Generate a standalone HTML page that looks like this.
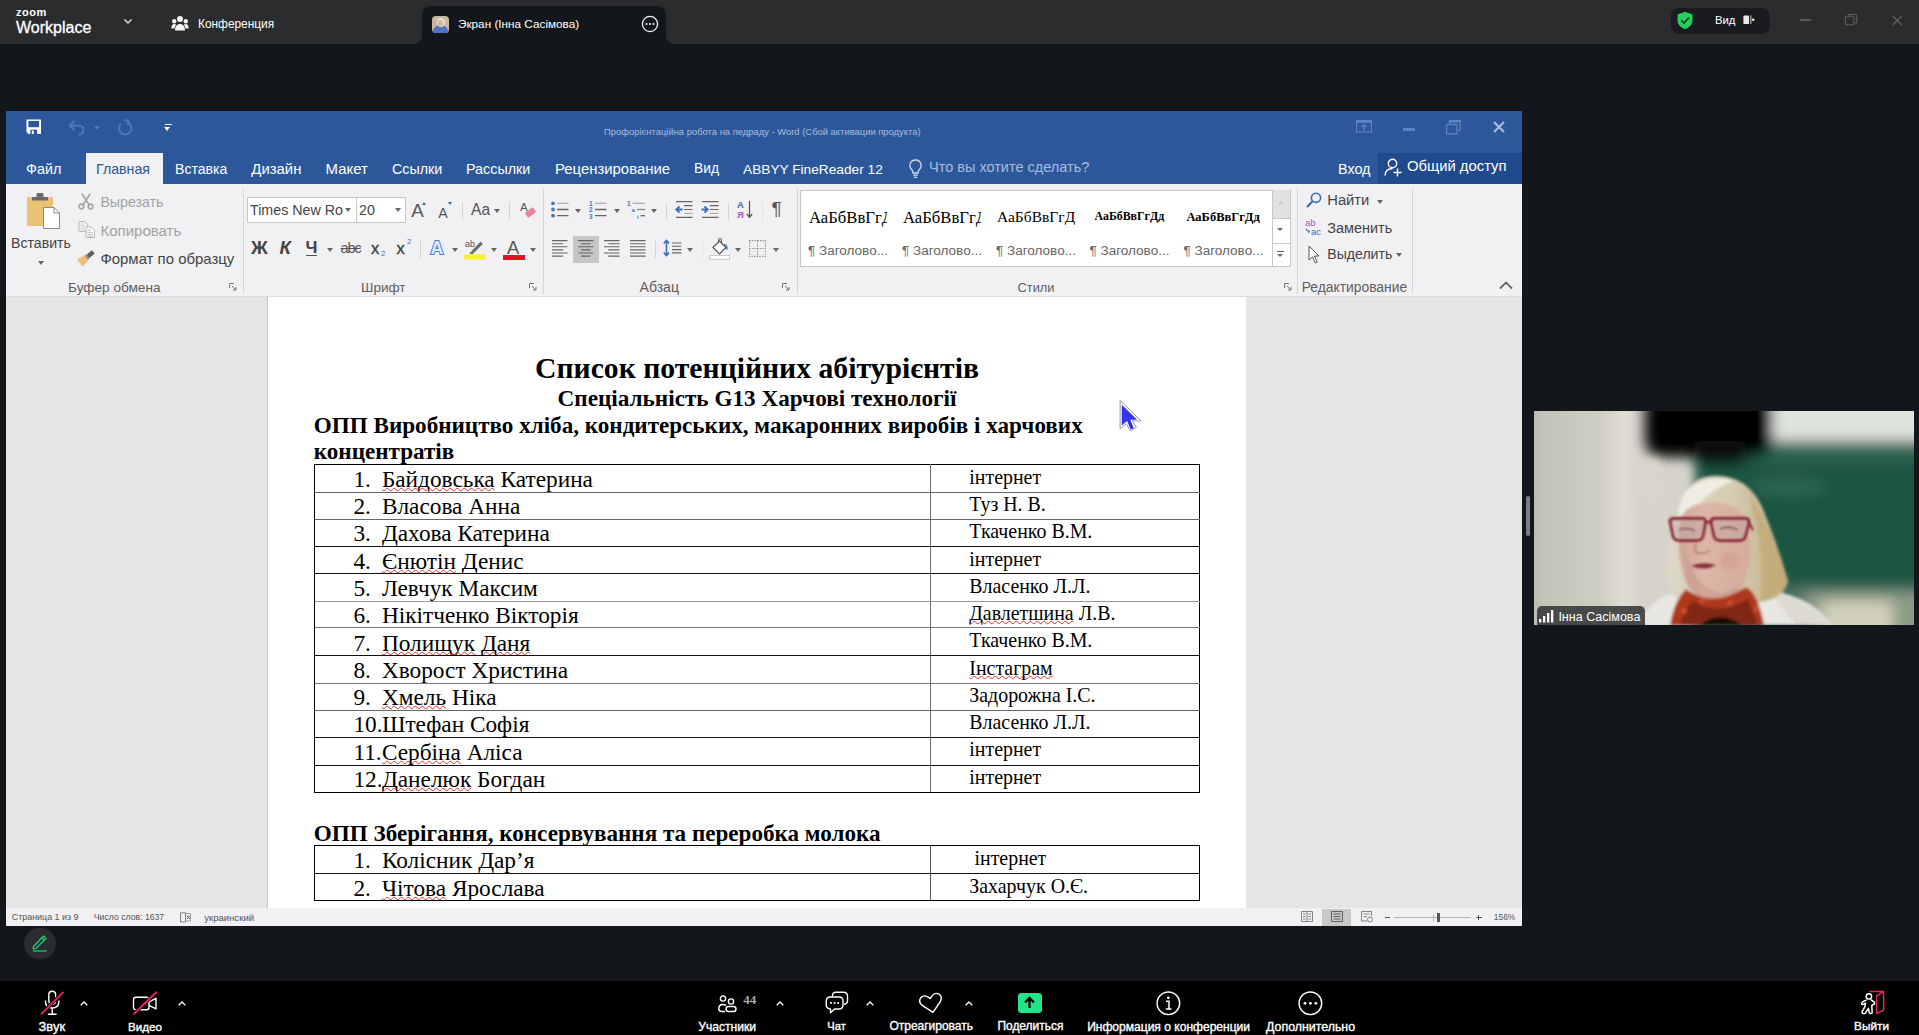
<!DOCTYPE html>
<html lang="ru"><head><meta charset="utf-8"><title>Zoom Workplace</title>
<style>
html,body{margin:0;padding:0}
body{width:1919px;height:1035px;overflow:hidden;background:#13161a;position:relative;font-family:"Liberation Sans",sans-serif;color:#fff}
.a{position:absolute}
.t{position:absolute;white-space:nowrap;line-height:1}
svg{position:absolute;overflow:visible}
/* zoom top bar */
#top{left:0;top:0;width:1919px;height:44px;background:#2b2c2e}
#tabact{left:422px;top:6px;width:244px;height:38px;background:#13161a;border-radius:9px 9px 0 0}
/* word */
#word{left:6px;top:111px;width:1516px;height:815px;background:#e5e5e5;overflow:hidden}
#wtitle{left:0;top:0;width:1516px;height:73px;background:#2c589b}
#ribbon{left:0;top:73px;width:1516px;height:112.500px;background:#f1f0f2;border-bottom:1px solid #dcdcde;box-sizing:border-box}
.tab{position:absolute;top:51px;font-size:14.9px;line-height:1;color:#fff;white-space:nowrap}
.sep{position:absolute;top:3px;width:1px;height:106px;background:#d6d6d8}
.gl{position:absolute;top:169px;font-size:13.6px;line-height:1;color:#5e5e5e;white-space:nowrap}
.rt{position:absolute;font-size:14.9px;line-height:1;color:#444;white-space:nowrap}
.dd{position:absolute;width:0;height:0;border-left:3.8px solid transparent;border-right:3.8px solid transparent;border-top:4.2px solid #666}
.vs{position:absolute;width:1px;height:20px;background:#d4d4d4}
#page{left:261px;top:186px;width:979px;height:612px;background:#fff;border-left:1px solid #c9c9c9;box-sizing:border-box}
#status{left:0;top:797px;width:1516px;height:18px;background:#f1f0f2}
.st{position:absolute;font-size:8.6px;line-height:1;color:#555;white-space:nowrap}
/* doc */
.doc{font-family:"Liberation Serif",serif;color:#000}
.h{position:absolute;white-space:nowrap;line-height:1;font-weight:bold;font-family:"Liberation Serif",serif;color:#000}
table.d{position:absolute;border-collapse:collapse;font-family:"Liberation Serif",serif;color:#000}
.w{text-decoration:underline wavy #e03030;text-decoration-thickness:1px;text-underline-offset:.4px;text-decoration-skip-ink:none}
/* bottom */
#bot{left:0;top:981px;width:1919px;height:54px;background:#000}
.bl{position:absolute;top:1020.700px;font-size:12px;line-height:1;color:#fff;white-space:nowrap;transform:translateX(-50%);-webkit-text-stroke:.35px #fff}
</style></head><body>
<!-- ZOOM TOP BAR -->
<div class="a" id="top"></div>
<div class="a" id="tabact"></div>
<div class="a" style="left:414px;top:36px;width:8px;height:8px;background:radial-gradient(circle at 0 0,rgba(19,22,26,0) 7.500px,#13161a 8px)"></div>
<div class="a" style="left:666px;top:36px;width:8px;height:8px;background:radial-gradient(circle at 100% 0,rgba(19,22,26,0) 7.500px,#13161a 8px)"></div>
<div class="t" style="left:16px;top:7px;font-size:11px;font-weight:bold;letter-spacing:.55px;color:#fff">zoom</div>
<div class="t" style="left:16px;top:19.500px;font-size:16px;color:#fff;-webkit-text-stroke:.3px #fff;letter-spacing:0">Workplace</div>
<svg style="left:123px;top:18px" width="10" height="8" viewBox="0 0 10 8"><path d="M1.5 1.5 L5 5 L8.5 1.5" fill="none" stroke="#e0e0e0" stroke-width="1.4"/></svg>
<svg style="left:171px;top:15px" width="18" height="17" viewBox="0 0 18 17"><g fill="#f2f2f2"><circle cx="9" cy="4" r="3"/><circle cx="3.2" cy="6.2" r="2.2"/><circle cx="14.8" cy="6.2" r="2.2"/><path d="M4 15.5c0-4 2-6.5 5-6.5s5 2.500 5 6.500z"/><path d="M0.300 13.500c0-3 1.200-4.500 3-4.500 .8 0 1.400.2 1.900.7-1 1.200-1.500 2.500-1.600 3.800z"/><path d="M17.700 13.500c0-3-1.200-4.500-3-4.500-.8 0-1.400.2-1.900.7 1 1.200 1.500 2.500 1.600 3.800z"/></g></svg>
<div class="t" style="left:198px;top:18.500px;font-size:11.9px;color:#fff">Конференция</div>
<div class="a" style="left:432px;top:16px;width:17px;height:17px;border-radius:4px;background:#c8b99f;overflow:hidden"><div class="a" style="left:1px;top:9px;width:15px;height:12px;border-radius:50% 50% 0 0;background:#4f74c4"></div><div class="a" style="left:4.500px;top:1.500px;width:8px;height:9px;border-radius:50%;background:#e4ddcc"></div><div class="a" style="left:6px;top:4px;width:5px;height:6px;border-radius:50%;background:#d8b5a0"></div></div>
<div class="t" style="left:458px;top:17.500px;font-size:11.75px;color:#fff">Экран (Інна Сасімова)</div>
<svg style="left:641px;top:15px" width="18" height="18" viewBox="0 0 18 18"><circle cx="9" cy="9" r="7.600" fill="none" stroke="#f2f2f2" stroke-width="1.300"/><circle cx="5.500" cy="9" r="1.100" fill="#f2f2f2"/><circle cx="9" cy="9" r="1.100" fill="#f2f2f2"/><circle cx="12.500" cy="9" r="1.100" fill="#f2f2f2"/></svg>
<div class="a" style="left:1671px;top:8px;width:99px;height:26px;border-radius:8px;background:#191b1e"></div>
<svg style="left:1676px;top:11px" width="18" height="19" viewBox="0 0 18 19"><path d="M9 .8 L16.500 3.400 V9 C16.500 13.500 13.200 16.800 9 18.200 C4.800 16.800 1.500 13.500 1.500 9 V3.400 Z" fill="#23d05f"/><path d="M5.200 9.300 L8 12 L13 6.600" fill="none" stroke="#0b3d1c" stroke-width="1.700"/></svg>
<div class="t" style="left:1715px;top:14.500px;font-size:11.3px;color:#fff">Вид</div>
<svg style="left:1743px;top:14.500px" width="12" height="9.500" viewBox="0 0 14 11"><rect x="0.500" y="0.500" width="6.500" height="10" rx="1" fill="#e8e8e8"/><rect x="8" y="0.500" width="2" height="10" fill="#8a8a8a"/><circle cx="11.800" cy="5.500" r="1.600" fill="#e8e8e8"/></svg>
<div class="a" style="left:1800px;top:19px;width:10.500px;height:1.500px;background:#5a5b5d"></div>
<svg style="left:1845px;top:14px" width="12.600" height="11.700" viewBox="0 0 14 13"><rect x="0.500" y="2.500" width="9.500" height="9.500" rx="1.500" fill="none" stroke="#5d5e60" stroke-width="1.200"/><path d="M3.500 2.500 V1.800 Q3.500 .6 4.700 .6 H11.800 Q13 .6 13 1.800 V8.800 Q13 10 11.800 10 H10.500" fill="none" stroke="#5d5e60" stroke-width="1.200"/></svg>
<svg style="left:1892px;top:14.500px" width="10.500" height="11" viewBox="0 0 13 13"><path d="M1 1 L12 12 M12 1 L1 12" stroke="#68696b" stroke-width="1.400"/></svg>
<!-- WORD WINDOW -->
<div class="a" id="word">
<div class="a" id="wtitle"></div>
<!-- QAT -->
<svg style="left:19.500px;top:8px" width="15.500" height="15.500" viewBox="0 0 16 16"><path d="M.5 .5 H15.500 V15.500 H2.500 L.5 13.500 Z" fill="#fff"/><rect x="2.500" y="2" width="11" height="6.500" fill="#2b579a"/><rect x="4.500" y="11" width="7" height="4.500" fill="#2b579a"/><rect x="6" y="12" width="2" height="3.500" fill="#fff"/></svg>
<svg style="left:61.500px;top:8.500px" width="17" height="16" viewBox="0 0 17 16"><path d="M2 5.500 H10 Q15.500 5.500 15.500 10 Q15.500 14.300 10.500 14.800" fill="none" stroke="#4e77b8" stroke-width="2.100"/><path d="M6.300 1 L1.800 5.500 L6.300 10" fill="none" stroke="#4e77b8" stroke-width="2.100"/></svg>
<div class="dd" style="left:87.500px;top:15px;border-top-color:#4e77b8"></div>
<svg style="left:110.500px;top:8px" width="17" height="17" viewBox="0 0 17 17"><path d="M10.500 3.500 A6.200 6.200 0 1 1 3.800 5" fill="none" stroke="#4e77b8" stroke-width="2.100"/><path d="M6.800 1.500 H11.300 V6.300" fill="none" stroke="#4e77b8" stroke-width="2.100"/></svg>
<div class="a" style="left:158.500px;top:12.500px;width:7px;height:1.500px;background:#fff"></div>
<div class="dd" style="left:158.300px;top:15.500px;border-top-color:#fff"></div>
<div class="t" style="left:598px;top:15.800px;font-size:9.42px;color:#aabcdc">Профорієнтаційна робота на педраду - Word (Сбой активации продукта)</div>
<!-- window controls -->
<svg style="left:1350px;top:9px" width="16" height="12.500" viewBox="0 0 17 13" preserveAspectRatio="none"><rect x=".6" y=".6" width="15.800" height="11.800" fill="none" stroke="#5f83bd" stroke-width="1.200"/><rect x=".6" y=".6" width="15.800" height="2.400" fill="#5f83bd"/><path d="M8.500 11 V5 M5.800 7.500 L8.500 4.800 L11.200 7.500" fill="none" stroke="#5f83bd" stroke-width="1.400"/></svg>
<div class="a" style="left:1397px;top:17px;width:12px;height:2.500px;background:#5f83bd"></div>
<svg style="left:1440px;top:9px" width="15" height="14.500" viewBox="0 0 17 15" preserveAspectRatio="none"><rect x=".7" y="4.700" width="11.600" height="9.600" fill="none" stroke="#5f83bd" stroke-width="1.400"/><path d="M4 4.500 V.8 H16.200 V10.500 H12.500" fill="none" stroke="#5f83bd" stroke-width="1.400"/><path d="M4 1.600 H16.200" stroke="#5f83bd" stroke-width="2"/></svg>
<svg style="left:1487px;top:10px" width="12" height="12" viewBox="0 0 12 12"><path d="M1 1 L11 11 M11 1 L1 11" stroke="#a9bcdc" stroke-width="2.200"/></svg>
<!-- tabs -->
<div class="a" style="left:80px;top:42px;width:77px;height:32px;background:#f1f0f2"></div>
<div class="tab" style="left:20px;font-size:14.36px">Файл</div>
<div class="tab" style="left:90px;color:#2b579a;font-size:14.19px">Главная</div>
<div class="tab" style="left:169px;font-size:14.07px">Вставка</div>
<div class="tab" style="left:245.300px">Дизайн</div>
<div class="tab" style="left:319.600px">Макет</div>
<div class="tab" style="left:386px;font-size:14.29px">Ссылки</div>
<div class="tab" style="left:460px;font-size:14.33px">Рассылки</div>
<div class="tab" style="left:549px">Рецензирование</div>
<div class="tab" style="left:688px;font-size:13.82px">Вид</div>
<div class="tab" style="left:737px;font-size:13.7px;top:52px">ABBYY FineReader 12</div>
<svg style="left:902px;top:48px" width="15" height="20" viewBox="0 0 15 20"><path d="M7.500 1 A5.500 5.500 0 0 1 11 10.800 Q10 12 10 14 H5 Q5 12 4 10.800 A5.500 5.500 0 0 1 7.500 1 Z" fill="none" stroke="#cfdaec" stroke-width="1.300"/><path d="M5.200 16.200 H9.800 M5.800 18.300 H9.200" stroke="#cfdaec" stroke-width="1.300"/></svg>
<div class="tab" style="left:923px;top:49.300px;font-size:14.5px;color:#a9bcdc">Что вы хотите сделать?</div>
<div class="tab" style="left:1332px;top:51px;font-size:14.37px">Вход</div>
<div class="a" style="left:1372px;top:42px;width:144px;height:31px;background:#1f4a8c"></div>
<svg style="left:1378px;top:47px" width="19" height="19" viewBox="0 0 19 19"><circle cx="8.500" cy="5.500" r="4.200" fill="none" stroke="#fff" stroke-width="1.400"/><path d="M1 17.500 Q1.500 10.500 8.500 10.500" fill="none" stroke="#fff" stroke-width="1.400"/><path d="M9.500 14.500 H17.500 M13.500 10.500 V18.500" stroke="#fff" stroke-width="1.400"/></svg>
<div class="tab" style="left:1401px;top:47.500px;font-size:14.82px">Общий доступ</div>
<div class="a" id="ribbon"></div>
<div class="a" id="rc" style="left:0;top:74px;width:1516px;height:112px">
<!-- Clipboard -->
<svg style="left:20px;top:7px" width="36" height="38" viewBox="0 0 36 38"><rect x="1" y="5" width="26" height="29" rx="1" fill="#eac273"/><path d="M6 8.500 V5 H10.500 V2.500 Q10.500 1 12 1 H16 Q17.500 1 17.500 2.500 V5 H22 V8.500 Z" fill="#6a6a6a"/><path d="M17.500 15.500 H28 L33.500 21 V36.500 H17.500 Z" fill="#fff" stroke="#8c8c8c" stroke-width="1"/><path d="M28 15.500 V21 H33.500" fill="none" stroke="#8c8c8c" stroke-width="1"/></svg>
<div class="rt" style="left:5px;top:51px;font-size:14.15px">Вставить</div>
<div class="dd" style="left:32px;top:76px"></div>
<svg style="left:72px;top:8px" width="16" height="17" viewBox="0 0 16 17"><g fill="none" stroke="#a6a6a6" stroke-width="1.600"><path d="M3.800 .5 L10.800 11.500 M12.200 .5 L5.200 11.500"/><circle cx="3.400" cy="13.400" r="2.300"/><circle cx="12.600" cy="13.400" r="2.300"/></g></svg>
<div class="rt" style="left:94.400px;top:10px;font-size:14.16px;color:#a3a3a3">Вырезать</div>
<svg style="left:72px;top:36px" width="18" height="17" viewBox="0 0 18 17"><g fill="#f7f7f7" stroke="#b9b9b9" stroke-width="1"><path d="M1 .5 H6.500 L9.500 3.500 V10.500 H1 Z"/><path d="M8 6 H13.500 L16.500 9 V16.500 H8 Z"/></g><path d="M2.500 3 H6 M2.500 5 H7.500 M2.500 7 H6.500 M2.500 9 H6.500 M9.500 9.500 H13 M9.500 11.500 H15 M9.500 13.500 H15 M9.500 15.300 H15" stroke="#c2c2c2" stroke-width=".9"/></svg>
<div class="rt" style="left:94.400px;top:37.500px;font-size:15.04px;color:#a3a3a3">Копировать</div>
<svg style="left:71px;top:64px" width="19" height="18" viewBox="0 0 19 18"><g transform="rotate(-40 9 9)"><rect x="11.500" y="6.800" width="7" height="4.400" fill="#5d5d5d"/><rect x="9.300" y="6.300" width="2.200" height="5.400" fill="#8a8a8a"/><path d="M9.300 5.800 L9.300 12.200 L1 13.500 L1 4.500 Z" fill="#e8bf74"/></g></svg>
<div class="rt" style="left:94.400px;top:67px;font-size:14.94px">Формат по образцу</div>
<div class="gl" style="left:62px;top:96px;font-size:13.61px">Буфер обмена</div>
<svg class="ln" style="left:223px;top:98px" width="8" height="8" viewBox="0 0 8 8"><path d="M.5 5 V.5 H5" fill="none" stroke="#777" stroke-width="1"/><path d="M3 3 L7 7 M7 4 V7 H4" fill="none" stroke="#777" stroke-width="1"/></svg>
<div class="sep" style="left:236.500px;top:3px"></div>
<!-- Font -->
<div class="a" style="left:241px;top:12px;width:159px;height:26px;background:#fff;border:1px solid #c6c6c6;box-sizing:border-box"></div>
<div class="a" style="left:350px;top:12px;width:1px;height:26px;background:#c6c6c6"></div>
<div class="a" style="left:243px;top:13px;width:94px;height:24px;overflow:hidden"><div class="rt" style="left:1px;top:5px;font-size:14.26px">Times New Rom</div></div>
<div class="dd" style="left:339px;top:22.500px"></div>
<div class="rt" style="left:353px;top:18px;font-size:14.3px">20</div>
<div class="dd" style="left:388.500px;top:22.500px"></div>
<div class="rt" style="left:405.300px;top:16.500px;font-size:18.800px;color:#555">A</div>
<div class="a" style="left:416px;top:17px;width:0;height:0;border-left:2.500px solid transparent;border-right:2.500px solid transparent;border-bottom:3px solid #3b6cb3"></div>
<div class="rt" style="left:432.300px;top:20.500px;font-size:14.200px;color:#555">A</div>
<div class="a" style="left:441.500px;top:17px;width:0;height:0;border-left:2.500px solid transparent;border-right:2.500px solid transparent;border-top:3px solid #3b6cb3"></div>
<div class="vs" style="left:456px;top:17px;height:18px"></div>
<div class="rt" style="left:465px;top:17.300px;font-size:15.600px;color:#555">Aa</div>
<div class="dd" style="left:488px;top:24px"></div>
<div class="vs" style="left:503px;top:17px;height:18px"></div>
<svg style="left:513px;top:16px" width="18" height="18" viewBox="0 0 18 18"><text x="1" y="10" font-family="Liberation Sans, sans-serif" font-size="11.500" fill="#555">A</text><rect x="6.500" y="8.500" width="10" height="6" rx="1" fill="#e8849c" transform="rotate(-38 11.500 11.500)"/></svg>
<div class="rt" style="left:245px;top:53.500px;font-size:18.5px;font-weight:bold;color:#444">Ж</div>
<div class="rt" style="left:273.400px;top:53.500px;font-size:18.5px;font-weight:bold;font-style:italic;color:#444">К</div>
<div class="rt" style="left:299.500px;top:56px;font-size:17px;font-weight:bold;color:#444;border-bottom:1.300px solid #555;padding-bottom:0;line-height:.84">Ч</div>
<div class="dd" style="left:321px;top:62.500px"></div>
<div class="rt" style="left:334.500px;top:55.500px;font-size:14.5px;color:#555;text-decoration:line-through;letter-spacing:-1.100px">abc</div>
<div class="rt" style="left:365px;top:55px;font-size:16.5px;color:#444;-webkit-text-stroke:.4px #444">x</div>
<div class="rt" style="left:375px;top:65px;font-size:7.500px;color:#3b6cb3">2</div>
<div class="rt" style="left:390.500px;top:55px;font-size:16.5px;color:#444;-webkit-text-stroke:.4px #444">x</div>
<div class="rt" style="left:401px;top:52.500px;font-size:7.500px;color:#3b6cb3">2</div>
<div class="vs" style="left:414px;top:55px;height:18px"></div>
<svg style="left:423px;top:53px" width="18" height="20" viewBox="0 0 18 20"><text x="1.600" y="16.300" font-family="Liberation Sans, sans-serif" font-size="17.800" font-weight="bold" fill="#dfeaf8" stroke="#3f7ecf" stroke-width="2" paint-order="stroke">A</text></svg>
<div class="dd" style="left:445.500px;top:62.500px"></div>
<svg style="left:459px;top:54px" width="22" height="21" viewBox="0 0 22 21"><text x="0" y="8" font-family="Liberation Sans, sans-serif" font-size="9" fill="#555">ab</text><path d="M4.300 14.500 L15.500 2.700 L18 4.800 L7.500 15.300 Z" fill="#6a6a6a"/><rect x="-.7" y="15.300" width="21.700" height="5.300" fill="#f8f22a"/></svg>
<div class="dd" style="left:484.500px;top:62.500px"></div>
<div class="rt" style="left:501px;top:54px;font-size:18.300px;color:#555">A</div>
<div class="a" style="left:497.300px;top:69.800px;width:21.700px;height:5px;background:#e81123"></div>
<div class="dd" style="left:523.700px;top:62.500px"></div>
<div class="gl" style="left:355px;top:96px;font-size:13.53px">Шрифт</div>
<svg class="ln" style="left:523px;top:98px" width="8" height="8" viewBox="0 0 8 8"><path d="M.5 5 V.5 H5" fill="none" stroke="#777" stroke-width="1"/><path d="M3 3 L7 7 M7 4 V7 H4" fill="none" stroke="#777" stroke-width="1"/></svg>
<div class="sep" style="left:537px;top:3px"></div>
<!-- Paragraph -->
<svg style="left:544.500px;top:16px" width="18" height="17" viewBox="0 0 18 17"><g fill="#4a78b8"><circle cx="2" cy="2.300" r="1.900"/><circle cx="2" cy="8.500" r="1.900"/><circle cx="2" cy="14.700" r="1.900"/></g><path d="M6 2.300 H17.500" stroke="#b0b0b0" stroke-width="1.300"/><path d="M6 8.500 H17.500 M6 14.700 H17.500" stroke="#666" stroke-width="1.300"/></svg>
<div class="dd" style="left:569px;top:24px"></div>
<svg style="left:583px;top:15px" width="18" height="19" viewBox="0 0 18 19"><g font-family="Liberation Sans, sans-serif" font-size="6.500" font-weight="bold" fill="#4a78b8"><text x="0" y="5.500">1</text><text x="0" y="12">2</text><text x="0" y="18.500">3</text></g><path d="M6 3.300 H17.500" stroke="#b0b0b0" stroke-width="1.300"/><path d="M6 9.500 H17.500 M6 15.700 H17.500" stroke="#666" stroke-width="1.300"/></svg>
<div class="dd" style="left:607.500px;top:24px"></div>
<svg style="left:621px;top:15px" width="19" height="19" viewBox="0 0 19 19"><g font-family="Liberation Sans, sans-serif" font-size="6.500" font-weight="bold" fill="#4a78b8"><text x="0" y="5.500">1</text><text x="4.500" y="12" font-size="6">a</text><text x="10" y="18.500" font-size="6">i</text></g><path d="M5.500 3.300 H18" stroke="#b0b0b0" stroke-width="1.300"/><path d="M10 9.500 H18" stroke="#888" stroke-width="1.300"/><path d="M13.500 15.700 H18" stroke="#666" stroke-width="1.300"/></svg>
<div class="dd" style="left:644.700px;top:24px"></div>
<div class="vs" style="left:660px;top:17.500px;height:17px"></div>
<svg style="left:668.500px;top:16px" width="18" height="17" viewBox="0 0 18 17"><path d="M1 .7 H17.500 M1 16.300 H17.500" stroke="#666" stroke-width="1.200"/><path d="M9 4.600 H17.500 M9 8.500 H17.500" stroke="#666" stroke-width="1.200"/><path d="M9 12.400 H17.500" stroke="#b0b0b0" stroke-width="1.200"/><path d="M7.500 8.500 H1.500 M4.500 5.300 L1.300 8.500 L4.500 11.700" fill="none" stroke="#3b6cb3" stroke-width="1.800"/></svg>
<svg style="left:694.500px;top:16px" width="18" height="17" viewBox="0 0 18 17"><path d="M1 .7 H17.500 M1 16.300 H17.500" stroke="#666" stroke-width="1.200"/><path d="M9 4.600 H17.500 M9 8.500 H17.500" stroke="#666" stroke-width="1.200"/><path d="M9 12.400 H17.500" stroke="#b0b0b0" stroke-width="1.200"/><path d="M.5 8.500 H6.500 M3.500 5.300 L6.700 8.500 L3.500 11.700" fill="none" stroke="#3b6cb3" stroke-width="1.800"/></svg>
<div class="vs" style="left:721.500px;top:17.500px;height:17px"></div>
<svg style="left:730.500px;top:15px" width="17" height="19" viewBox="0 0 17 19"><text x="0" y="8" font-family="Liberation Sans, sans-serif" font-size="9.500" font-weight="bold" fill="#3b6cb3">А</text><text x="0" y="17.500" font-family="Liberation Sans, sans-serif" font-size="9.500" font-weight="bold" fill="#a15ab5">Я</text><path d="M12.500 1 V17 M9.800 14 L12.500 17.200 L15.200 14" fill="none" stroke="#555" stroke-width="1.200"/></svg>
<div class="vs" style="left:755.500px;top:17.500px;height:17px;background:#e4e4e4"></div>
<div class="rt" style="left:765.500px;top:14px;font-size:19px;color:#555">¶</div>
<div class="a" style="left:567px;top:51px;width:26px;height:26.500px;background:#c6c6c6"></div>
<svg style="left:545.5px;top:55px" width="15.5" height="18.6" viewBox="0 0 15.5 18.6"><path d="M0.0 0.6 H15.5 M0.0 3.7 H11.2 M0.0 6.8 H15.5 M0.0 9.9 H11.2 M0.0 13.0 H15.5 M0.0 16.1 H11.2 " stroke="#666" stroke-width="1.1" fill="none"/></svg><svg style="left:572px;top:55px" width="15.5" height="18.6" viewBox="0 0 15.5 18.6"><path d="M0.0 0.6 H15.5 M3.1 3.7 H12.4 M0.0 6.8 H15.5 M3.1 9.9 H12.4 M0.0 13.0 H15.5 M3.1 16.1 H12.4 " stroke="#666" stroke-width="1.1" fill="none"/></svg><svg style="left:598px;top:55px" width="15.5" height="18.6" viewBox="0 0 15.5 18.6"><path d="M0.0 0.6 H15.5 M4.3 3.7 H15.5 M0.0 6.8 H15.5 M4.3 9.9 H15.5 M0.0 13.0 H15.5 M4.3 16.1 H15.5 " stroke="#666" stroke-width="1.1" fill="none"/></svg><svg style="left:624px;top:55px" width="15.5" height="18.6" viewBox="0 0 15.5 18.6"><path d="M0.0 0.6 H15.5 M0.0 3.7 H15.5 M0.0 6.8 H15.5 M0.0 9.9 H15.5 M0.0 13.0 H15.5 M0.0 16.1 H15.5 " stroke="#666" stroke-width="1.1" fill="none"/></svg>
<div class="vs" style="left:649px;top:56px;height:17px"></div>
<svg style="left:657px;top:54px" width="19" height="18" viewBox="0 0 19 18"><path d="M3.500 1.500 V16.500 M.8 4.500 L3.500 1.500 L6.200 4.500 M.8 13.500 L3.500 16.500 L6.200 13.500" fill="none" stroke="#3b6cb3" stroke-width="1.600"/><path d="M9 4 H18.500 M9 7.300 H18.500 M9 10.600 H18.500 M9 13.900 H18.500" stroke="#666" stroke-width="1.100"/></svg>
<div class="dd" style="left:680.500px;top:62.500px"></div>
<div class="vs" style="left:695.500px;top:56px;height:17px;background:#e4e4e4"></div>
<svg style="left:703px;top:53px" width="21" height="22" viewBox="0 0 21 22"><path d="M10.500 3 L17 9.500 L10.500 16 L4 9.500 Z" fill="#fff" stroke="#555" stroke-width="1.200"/><path d="M9.500 4.500 V2 Q9.500 .6 11 .6 Q12.500 .6 12.500 2 V5" fill="none" stroke="#555" stroke-width="1"/><path d="M15 6.500 Q18.500 7.500 17.500 11.500" fill="none" stroke="#4a78b8" stroke-width="1.800"/><rect x=".5" y="17.500" width="20" height="3.800" fill="#fff" stroke="#c8c8c8" stroke-width="1"/></svg>
<div class="dd" style="left:728.500px;top:62.500px"></div>
<svg style="left:743px;top:54.500px" width="17" height="17" viewBox="0 0 17 17"><path d="M.6 .6 H16.400 V16.400 H.6 Z M8.500 .6 V16.400 M.6 8.500 H16.400" fill="none" stroke="#8a8a8a" stroke-width="1.100" stroke-dasharray="1.300 1.300"/></svg>
<div class="dd" style="left:767.300px;top:62.500px"></div>
<div class="gl" style="left:633.500px;top:95px;font-size:14.08px">Абзац</div>
<svg class="ln" style="left:776px;top:98px" width="8" height="8" viewBox="0 0 8 8"><path d="M.5 5 V.5 H5" fill="none" stroke="#777" stroke-width="1"/><path d="M3 3 L7 7 M7 4 V7 H4" fill="none" stroke="#777" stroke-width="1"/></svg>
<div class="sep" style="left:790.500px;top:3px"></div>
<!-- Styles -->
<div class="a" style="left:794px;top:4.500px;width:490.500px;height:77px;background:#fff;border:1px solid #c8c8c8;box-sizing:border-box"></div>
<div class="a" style="left:802px;top:22px;width:79px;height:24px;overflow:hidden"><div class="t" style="left:1px;top:3px;font-family:'Liberation Serif',serif;font-size:16.7px;color:#000">АаБбВвГгДд</div></div>
<div class="rt" style="left:802px;top:59px;font-size:13.53px;color:#666">¶ Заголово...</div>
<div class="a" style="left:896px;top:22px;width:79px;height:24px;overflow:hidden"><div class="t" style="left:1px;top:3px;font-family:'Liberation Serif',serif;font-size:16.7px;color:#000">АаБбВвГгДд</div></div>
<div class="rt" style="left:896px;top:59px;font-size:13.53px;color:#666">¶ Заголово...</div>
<div class="t" style="left:991px;top:24px;font-family:'Liberation Serif',serif;font-size:15.5px;color:#000">АаБбВвГгД</div>
<div class="rt" style="left:990px;top:59px;font-size:13.53px;color:#666">¶ Заголово...</div>
<div class="t" style="left:1088.5px;top:26px;font-family:'Liberation Serif',serif;font-size:11.9px;font-weight:bold;color:#000">АаБбВвГгДд</div>
<div class="rt" style="left:1083.5px;top:59px;font-size:13.53px;color:#666">¶ Заголово...</div>
<div class="t" style="left:1180.5px;top:25.500px;font-family:'Liberation Serif',serif;font-size:12.5px;font-weight:bold;color:#000">АаБбВвГгДд</div>
<div class="rt" style="left:1177.5px;top:59px;font-size:13.53px;color:#666">¶ Заголово...</div>
<div class="a" style="left:1265.500px;top:5px;width:18px;height:27.500px;background:#e1e1e1;border-left:1px solid #c8c8c8;box-sizing:border-box"></div>
<div class="a" style="left:1265.500px;top:32.500px;width:18px;height:25px;background:#fff;border-left:1px solid #c8c8c8;border-top:1px solid #c8c8c8;box-sizing:border-box"></div>
<div class="a" style="left:1265.500px;top:57.500px;width:18px;height:23.500px;background:#fff;border-left:1px solid #c8c8c8;border-top:1px solid #c8c8c8;box-sizing:border-box"></div>
<div class="a" style="left:1271.500px;top:16px;width:0;height:0;border-left:3.200px solid transparent;border-right:3.200px solid transparent;border-bottom:3.500px solid #c2c2c2"></div>
<div class="dd" style="left:1271px;top:43px;border-left-width:3.400px;border-right-width:3.400px;border-top-width:3.800px"></div>
<div class="a" style="left:1271px;top:65.500px;width:7px;height:1.200px;background:#666"></div>
<div class="dd" style="left:1271px;top:68.500px;border-left-width:3.400px;border-right-width:3.400px;border-top-width:3.800px"></div>
<div class="gl" style="left:1011.500px;top:96.500px;font-size:12.84px">Стили</div>
<svg class="ln" style="left:1277.5px;top:98px" width="8" height="8" viewBox="0 0 8 8"><path d="M.5 5 V.5 H5" fill="none" stroke="#777" stroke-width="1"/><path d="M3 3 L7 7 M7 4 V7 H4" fill="none" stroke="#777" stroke-width="1"/></svg>
<div class="sep" style="left:1290.500px;top:3px"></div>
<!-- Editing -->
<svg style="left:1299.500px;top:6.500px" width="16" height="16" viewBox="0 0 16 16"><circle cx="10" cy="5.800" r="4.600" fill="none" stroke="#3b6cb3" stroke-width="1.600"/><path d="M6.600 9.200 L1 15" stroke="#3b6cb3" stroke-width="2"/></svg>
<div class="rt" style="left:1321.300px;top:8px;font-size:14.72px">Найти</div>
<div class="dd" style="left:1370.500px;top:14.500px"></div>
<svg style="left:1298.500px;top:32.500px" width="19" height="18" viewBox="0 0 19 18"><text x="0" y="7.500" font-family="Liberation Sans, sans-serif" font-size="9.500" fill="#a15ab5">ab</text><text x="6" y="16.500" font-family="Liberation Sans, sans-serif" font-size="9.500" fill="#3b6cb3">ac</text><path d="M1 10.500 Q1 13.500 4.500 13.500 M3 11.800 L4.800 13.500 L3 15.200" fill="none" stroke="#3b6cb3" stroke-width="1"/></svg>
<div class="rt" style="left:1321.300px;top:35.500px;font-size:14.46px">Заменить</div>
<svg style="left:1302px;top:59.500px" width="13" height="19" viewBox="0 0 13 19"><path d="M1 1 V15 L4.500 11.800 L7.300 18 L9.300 17 L6.500 11 H11 Z" fill="#fff" stroke="#555" stroke-width="1"/></svg>
<div class="rt" style="left:1321.300px;top:62px;font-size:14.09px">Выделить</div>
<div class="dd" style="left:1389.700px;top:67.500px"></div>
<div class="gl" style="left:1295.700px;top:95.500px;font-size:13.85px">Редактирование</div>
<div class="sep" style="left:1405.500px;top:3px"></div>
<svg style="left:1493px;top:96px" width="14" height="9" viewBox="0 0 14 9"><path d="M1 7.500 L7 1.500 L13 7.500" fill="none" stroke="#666" stroke-width="1.800"/></svg>
</div>
<div class="a" id="page"></div>
<!-- DOCUMENT -->
<div class="h" style="left:262px;width:978px;text-align:center;top:242.64px;font-size:29.68px">Список потенційних абітурієнтів</div>
<div class="h" style="left:262px;width:978px;text-align:center;top:276.37px;font-size:23.2px">Спеціальність G13 Харчові технології</div>
<div class="h" style="left:307.8px;top:302.84px;font-size:23.12px;">ОПП Виробництво хліба, кондитерських, макаронних виробів і харчових</div>
<div class="h" style="left:307.8px;top:328.94px;font-size:23.12px;">концентратів</div>
<div class="a" style="left:308px;top:352.8px;width:886.3px;height:328.8px;border:1.2px solid #000;box-sizing:border-box"></div>
<div class="a" style="left:924.2px;top:353.2px;width:1.3px;height:327.6px;background:#6e6e6e"></div>
<div class="a" style="left:309px;top:380.7px;width:885px;height:1.2px;background:#666"></div>
<div class="a" style="left:309px;top:407.5px;width:885px;height:1.2px;background:#666"></div>
<div class="a" style="left:309px;top:435.0px;width:885px;height:1.2px;background:#111"></div>
<div class="a" style="left:309px;top:462.2px;width:885px;height:1.2px;background:#111"></div>
<div class="a" style="left:309px;top:489.7px;width:885px;height:1.2px;background:#999"></div>
<div class="a" style="left:309px;top:516.3px;width:885px;height:1.2px;background:#777"></div>
<div class="a" style="left:309px;top:544.0px;width:885px;height:1.2px;background:#111"></div>
<div class="a" style="left:309px;top:572.0px;width:885px;height:1.2px;background:#777"></div>
<div class="a" style="left:309px;top:598.8px;width:885px;height:1.2px;background:#666"></div>
<div class="a" style="left:309px;top:626.3px;width:885px;height:1.2px;background:#111"></div>
<div class="a" style="left:309px;top:653.6px;width:885px;height:1.2px;background:#111"></div>
<div class="h" style="left:347.4px;top:356.89px;font-size:23.3px;font-weight:normal;">1.</div>
<div class="h" style="left:375.9px;top:356.89px;font-size:23.3px;font-weight:normal;"><span class="w">Байдовська</span> Катерина</div>
<div class="h" style="left:963.3px;top:356.73px;font-size:19.9px;font-weight:normal;">інтернет</div>
<div class="h" style="left:347.4px;top:384.16px;font-size:23.3px;font-weight:normal;">2.</div>
<div class="h" style="left:375.9px;top:384.16px;font-size:23.3px;font-weight:normal;">Власова Анна</div>
<div class="h" style="left:963.3px;top:384.0px;font-size:19.9px;font-weight:normal;">Туз Н. В.</div>
<div class="h" style="left:347.4px;top:411.43px;font-size:23.3px;font-weight:normal;">3.</div>
<div class="h" style="left:375.9px;top:411.43px;font-size:23.3px;font-weight:normal;">Дахова Катерина</div>
<div class="h" style="left:963.3px;top:411.27px;font-size:19.9px;font-weight:normal;">Ткаченко В.М.</div>
<div class="h" style="left:347.4px;top:438.7px;font-size:23.3px;font-weight:normal;">4.</div>
<div class="h" style="left:375.9px;top:438.7px;font-size:23.3px;font-weight:normal;"><span class="w">Єнютін</span> Денис</div>
<div class="h" style="left:963.3px;top:438.54px;font-size:19.9px;font-weight:normal;">інтернет</div>
<div class="h" style="left:347.4px;top:465.97px;font-size:23.3px;font-weight:normal;">5.</div>
<div class="h" style="left:375.9px;top:465.97px;font-size:23.3px;font-weight:normal;">Левчук Максим</div>
<div class="h" style="left:963.3px;top:465.81px;font-size:19.9px;font-weight:normal;">Власенко Л.Л.</div>
<div class="h" style="left:347.4px;top:493.24px;font-size:23.3px;font-weight:normal;">6.</div>
<div class="h" style="left:375.9px;top:493.24px;font-size:23.3px;font-weight:normal;">Нікітченко Вікторія</div>
<div class="h" style="left:963.3px;top:493.08px;font-size:19.9px;font-weight:normal;"><span class="w">Давлетшина</span> Л.В.</div>
<div class="h" style="left:347.4px;top:520.51px;font-size:23.3px;font-weight:normal;">7.</div>
<div class="h" style="left:375.9px;top:520.51px;font-size:23.3px;font-weight:normal;"><span class="w">Полищук</span> <span class="w">Даня</span></div>
<div class="h" style="left:963.3px;top:520.35px;font-size:19.9px;font-weight:normal;">Ткаченко В.М.</div>
<div class="h" style="left:347.4px;top:547.78px;font-size:23.3px;font-weight:normal;">8.</div>
<div class="h" style="left:375.9px;top:547.78px;font-size:23.3px;font-weight:normal;">Хворост Христина</div>
<div class="h" style="left:963.3px;top:547.62px;font-size:19.9px;font-weight:normal;"><span class="w">Інстаграм</span></div>
<div class="h" style="left:347.4px;top:575.05px;font-size:23.3px;font-weight:normal;">9.</div>
<div class="h" style="left:375.9px;top:575.05px;font-size:23.3px;font-weight:normal;"><span class="w">Хмель</span> Ніка</div>
<div class="h" style="left:963.3px;top:574.89px;font-size:19.9px;font-weight:normal;">Задорожна І.С.</div>
<div class="h" style="left:347.4px;top:602.32px;font-size:23.3px;font-weight:normal;">10.</div>
<div class="h" style="left:375.9px;top:602.32px;font-size:23.3px;font-weight:normal;">Штефан Софія</div>
<div class="h" style="left:963.3px;top:602.16px;font-size:19.9px;font-weight:normal;">Власенко Л.Л.</div>
<div class="h" style="left:347.4px;top:629.59px;font-size:23.3px;font-weight:normal;">11.</div>
<div class="h" style="left:375.9px;top:629.59px;font-size:23.3px;font-weight:normal;"><span class="w">Сербіна</span> Аліса</div>
<div class="h" style="left:963.3px;top:629.43px;font-size:19.9px;font-weight:normal;">інтернет</div>
<div class="h" style="left:347.4px;top:656.86px;font-size:23.3px;font-weight:normal;">12.</div>
<div class="h" style="left:375.9px;top:656.86px;font-size:23.3px;font-weight:normal;"><span class="w">Данелюк</span> Богдан</div>
<div class="h" style="left:963.3px;top:656.7px;font-size:19.9px;font-weight:normal;">інтернет</div>
<div class="h" style="left:307.8px;top:710.5px;font-size:23.12px;">ОПП Зберігання, консервування та переробка молока</div>
<div class="a" style="left:308px;top:734.4px;width:886.3px;height:55.8px;border:1.2px solid #000;box-sizing:border-box"></div>
<div class="a" style="left:924.2px;top:734.8px;width:1.3px;height:54.6px;background:#555"></div>
<div class="a" style="left:309px;top:761.8px;width:885px;height:1.2px;background:#111"></div>
<div class="h" style="left:347.4px;top:738.49px;font-size:23.3px;font-weight:normal;">1.</div>
<div class="h" style="left:375.9px;top:738.49px;font-size:23.3px;font-weight:normal;">Колісник Дар’я</div>
<div class="h" style="left:968.5px;top:738.33px;font-size:19.9px;font-weight:normal;">інтернет</div>
<div class="h" style="left:347.4px;top:765.79px;font-size:23.3px;font-weight:normal;">2.</div>
<div class="h" style="left:375.9px;top:765.79px;font-size:23.3px;font-weight:normal;"><span class="w">Чітова</span> Ярослава</div>
<div class="h" style="left:963.3px;top:765.63px;font-size:19.9px;font-weight:normal;">Захарчук О.Є.</div>
<div class="a" id="status"></div>
<div class="st" style="left:5.700px;top:802px;font-size:8.94px">Страница 1 из 9</div>
<div class="st" style="left:87.800px;top:802px;font-size:8.69px">Число слов: 1637</div>
<svg style="left:174px;top:800.500px" width="12" height="11" viewBox="0 0 12 11"><path d="M.5 .8 H5.500 V10 H.5 Z" fill="none" stroke="#777" stroke-width=".9"/><path d="M5.500 1.500 H10.500 V9 H5.500" fill="none" stroke="#999" stroke-width=".9"/><path d="M7 3.500 L10 7 M10 3.500 L7 7" stroke="#555" stroke-width=".9"/></svg>
<div class="st" style="left:198.200px;top:801.500px;font-size:9.59px">украинский</div>
<svg style="left:1294.500px;top:800px" width="12" height="11" viewBox="0 0 12 11"><path d="M.5 .5 H11.500 V10.500 H.5 Z M6 .5 V10.500 M2 3 H4.500 M2 5.500 H4.500 M2 8 H4.500 M7.500 3 H10 M7.500 5.500 H10 M7.500 8 H10" fill="none" stroke="#777" stroke-width=".9"/></svg>
<div class="a" style="left:1315.600px;top:798px;width:29.300px;height:17px;background:#c8c8c8"></div>
<svg style="left:1324.500px;top:800px" width="12" height="11" viewBox="0 0 12 11"><path d="M.5 .5 H11.500 V10.500 H.5 Z M2.500 3 H9.500 M2.500 5.500 H9.500 M2.500 8 H9.500" fill="none" stroke="#555" stroke-width=".9"/></svg>
<svg style="left:1354.800px;top:800px" width="12" height="12" viewBox="0 0 12 12"><path d="M.5 .5 H10.500 V5 M.5 .5 V10 H6 M2.500 3 H8.500 M2.500 5.500 H6" fill="none" stroke="#777" stroke-width=".9"/><circle cx="9" cy="8.500" r="2.500" fill="none" stroke="#777" stroke-width=".9"/></svg>
<div class="a" style="left:1379.200px;top:806px;width:4.700px;height:1.200px;background:#555"></div>
<div class="a" style="left:1388.200px;top:806px;width:77.300px;height:1px;background:#b5b5b5"></div>
<div class="a" style="left:1426.500px;top:803.500px;width:1px;height:6px;background:#b5b5b5"></div>
<div class="a" style="left:1431.200px;top:801.500px;width:2.800px;height:9.500px;background:#555"></div>
<div class="a" style="left:1469.800px;top:806px;width:5.800px;height:1.200px;background:#555"></div>
<div class="a" style="left:1472.100px;top:803.700px;width:1.200px;height:5.800px;background:#555"></div>
<div class="st" style="left:1487.800px;top:802px;font-size:8.41px">156%</div>
</div>
<!-- VIDEO TILE -->
<div class="a" id="vid" style="left:1534px;top:411px;width:380px;height:214px;overflow:hidden;background:#c9c7bb">
<svg style="left:0;top:0" width="380" height="214" viewBox="0 0 380 214">
<defs>
<filter id="b8" x="-20%" y="-20%" width="140%" height="140%"><feGaussianBlur stdDeviation="7"/></filter>
<filter id="b5" x="-20%" y="-20%" width="140%" height="140%"><feGaussianBlur stdDeviation="4"/></filter>
<filter id="b2" x="-20%" y="-20%" width="140%" height="140%"><feGaussianBlur stdDeviation="1.800"/></filter>
<filter id="b1" x="-20%" y="-20%" width="140%" height="140%"><feGaussianBlur stdDeviation=".8"/></filter>
<linearGradient id="wall" x1="0" x2="1" y1="0" y2="0"><stop offset="0" stop-color="#b4b4a8"/><stop offset=".1" stop-color="#c4c3b7"/><stop offset=".4" stop-color="#cfcec3"/><stop offset=".52" stop-color="#dedcd3"/><stop offset=".66" stop-color="#d6d4cb"/><stop offset="1" stop-color="#d2d0c7"/></linearGradient>
<linearGradient id="hair" x1="0" x2="1" y1="0" y2="0"><stop offset="0" stop-color="#ddd7c6"/><stop offset=".5" stop-color="#d6cdb3"/><stop offset="1" stop-color="#c4b188"/></linearGradient>
<linearGradient id="face" x1="0" x2="1" y1="0" y2="0"><stop offset="0" stop-color="#cfa699"/><stop offset=".35" stop-color="#dcb6a8"/><stop offset="1" stop-color="#d5ab9c"/></linearGradient>
</defs>
<rect width="380" height="214" fill="#cfcdc2"/>
<rect x="-10" y="-10" width="190" height="240" fill="url(#wall)"/>
<g filter="url(#b8)">
<rect x="160" y="30" width="250" height="200" fill="#1d5543"/>
<rect x="160" y="34" width="250" height="16" fill="#2f6553"/>
<rect x="240" y="-20" width="170" height="50" fill="#dfe4de"/>
<rect x="160" y="176" width="250" height="60" fill="#4f7564"/>
<rect x="270" y="182" width="140" height="50" fill="#8d9c88"/>
<rect x="288" y="190" width="70" height="40" fill="#d2d1bb"/>
<ellipse cx="255" cy="76" rx="38" ry="7" fill="#2f6a57"/>
<rect x="111" y="-20" width="127" height="66" rx="16" fill="#030604"/>
<rect x="160" y="30" width="52" height="24" rx="8" fill="#07100b"/>
</g>
<g filter="url(#b5)"><rect x="104" y="56" width="52" height="170" fill="#d5d3ca"/><rect x="96" y="48" width="30" height="40" fill="#d8d6cd"/></g>
<g filter="url(#b2)">
<!-- jacket -->
<path d="M104 214 Q116 188 140 182 L230 178 Q280 186 298 214 Z" fill="#e9e7e1"/>
<path d="M236 182 Q280 190 296 214 L262 214 Z" fill="#dcdad2"/>
<!-- hair -->
<path d="M176 65 Q212 62 228 96 Q244 134 254 170 Q250 186 232 190 L206 196 L150 190 Q132 186 132 160 Q134 124 142 100 Q152 68 176 65 Z" fill="url(#hair)"/>
<path d="M214 82 Q240 120 254 170 Q248 186 226 190 Q232 140 214 82 Z" fill="#c2aa76" opacity=".8"/>
<path d="M152 80 Q172 62 200 70 Q182 76 168 90 Q156 102 144 108 Q144 92 152 80 Z" fill="#efece2"/>
<!-- face -->
<path d="M146 112 Q148 96 168 92 Q200 88 212 108 Q220 140 212 166 Q204 188 182 192 Q160 190 150 166 Q142 140 146 112 Z" fill="url(#face)"/>
<path d="M146 130 Q154 150 152 172 Q166 192 184 192 Q204 188 212 166 Q206 178 188 182 Q166 178 158 158 Z" fill="#c99a8b" opacity=".65"/>
<ellipse cx="196" cy="150" rx="10" ry="9" fill="#d49d92" opacity=".6"/>
<!-- scarf -->
<path d="M136 214 Q140 190 152 178 Q178 198 212 176 Q224 182 230 214 Z" fill="#ae391b"/>
<path d="M146 214 Q150 196 160 190 Q184 206 214 188 L224 214 Z" fill="#6f1c10" opacity=".7"/>
<path d="M166 214 Q186 198 208 214 Z" fill="#0d0706" opacity=".9"/>
<circle cx="150" cy="200" r="3" fill="#d0502a"/><circle cx="222" cy="198" r="3" fill="#d0502a"/><circle cx="196" cy="192" r="2.500" fill="#d0502a"/><circle cx="168" cy="190" r="2.500" fill="#d0502a"/>
</g>
<g filter="url(#b1)">
<!-- glasses -->
<path d="M136 110 Q136 107.500 140 107.500 H168 Q172 107.500 171.500 111 L169 125 Q168 129.500 163 129.500 H146 Q140 129.500 139 125 Z" fill="rgba(190,160,165,.35)" stroke="#8b2130" stroke-width="2.800"/>
<path d="M177 111 Q177 107.500 181 107.500 H211 Q215.500 107.500 215 111 L211.500 125 Q210.500 129.500 205 129.500 H187 Q181 129.500 180 125 Z" fill="rgba(190,160,165,.35)" stroke="#8b2130" stroke-width="2.800"/>
<path d="M171 112 Q174 110 177 112" fill="none" stroke="#8b2130" stroke-width="2.400"/>
<path d="M214 110 L219 119" stroke="#8b2130" stroke-width="2.200"/>
<path d="M145 119 Q153 116 161 120 M186 118 Q195 114 204 119" fill="none" stroke="#7a625c" stroke-width="1.800"/>
<!-- nose & mouth -->
<path d="M162 132 Q159 140 163 142 Q170 143.500 176 140" fill="none" stroke="#b98373" stroke-width="1.800"/>
<path d="M157 155 Q168 150 182 154 Q172 160.500 157 155 Z" fill="#8c2d3d"/>
</g>
</svg>
<div class="a" style="left:3px;top:195px;width:108px;height:22px;border-radius:5px 5px 0 5px;background:rgba(48,50,52,.85)"></div>
<svg style="left:5px;top:199px" width="15" height="13" viewBox="0 0 15 13"><g fill="#fff"><rect x="0" y="9" width="2.300" height="3.500"/><rect x="4" y="6" width="2.300" height="6.500"/><rect x="8" y="3" width="2.300" height="9.500"/><rect x="12" y="0" width="2.300" height="12.500"/></g></svg>
<div class="t" style="left:24.400px;top:200px;font-size:12.52px;color:#fff">Інна Сасімова</div>
</div>
<!-- BOTTOM BAR -->
<div class="a" id="bot"></div>
<!-- pencil -->
<div class="a" style="left:24.200px;top:927.500px;width:31.600px;height:31.600px;border-radius:50%;background:#2a2c2f"></div>
<svg style="left:32px;top:934px" width="16" height="18" viewBox="0 0 16 18"><path d="M1.500 12.500 L1 15 L3.800 14.700 L14 4.500 L11.500 2 Z M9.800 3.700 L12.300 6.200" fill="none" stroke="#1fd37a" stroke-width="1.200" stroke-linejoin="round"/><path d="M1 17 H14.500" stroke="#1fd37a" stroke-width="1.200"/></svg>
<!-- divider handle -->
<div class="a" style="left:1525.800px;top:496px;width:4.300px;height:40px;border-radius:2px;background:#7b7e83"></div>
<!-- mic -->
<svg style="left:40px;top:990px" width="25" height="26" viewBox="0 0 25 26"><rect x="8.800" y="1.200" width="6.800" height="13" rx="3.400" fill="none" stroke="#fff" stroke-width="1.400"/><path d="M5.500 10.500 V11.500 Q5.500 18 12.200 18 Q18.900 18 18.900 11.500 V10.500 M12.200 18 V24 M7.800 24.300 H16.600" fill="none" stroke="#fff" stroke-width="1.400"/><path d="M1 24.300 L23.500 1.800" stroke="#000" stroke-width="3.600"/><path d="M1 24.300 L23.500 1.800" stroke="#e8235e" stroke-width="1.900"/></svg>
<svg style="left:80px;top:1001px" width="8" height="5" viewBox="0 0 8 5"><path d="M.7 4.300 L4 1 L7.300 4.300" fill="none" stroke="#fff" stroke-width="1.300"/></svg>
<div class="bl" style="left:51.800px;font-size:12.92px">Звук</div>
<!-- video -->
<svg style="left:132px;top:990px" width="26" height="26" viewBox="0 0 26 26"><rect x="1.500" y="7.300" width="15.500" height="12.500" rx="2.500" fill="none" stroke="#fff" stroke-width="1.400"/><path d="M17 11.800 L24 8.300 V18.800 L17 15.300" fill="none" stroke="#fff" stroke-width="1.400" stroke-linejoin="round"/><path d="M1.500 24.300 L24.700 1.800" stroke="#000" stroke-width="3.600"/><path d="M1.500 24.300 L24.700 1.800" stroke="#e8235e" stroke-width="1.900"/></svg>
<svg style="left:178px;top:1001px" width="8" height="5" viewBox="0 0 8 5"><path d="M.7 4.300 L4 1 L7.300 4.300" fill="none" stroke="#fff" stroke-width="1.300"/></svg>
<div class="bl" style="left:145px;font-size:11.64px">Видео</div>
<!-- participants -->
<svg style="left:717.500px;top:994.500px" width="19" height="18" viewBox="0 0 19 18"><g fill="none" stroke="#fff" stroke-width="1.400"><circle cx="5" cy="3.500" r="2.600"/><circle cx="13" cy="6.500" r="2.600"/><path d="M7 16.500 H3.500 Q.8 16.500 .8 13.800 Q.8 9.500 5 9.500 Q7 9.500 8 10.500"/><rect x="8" y="11.500" width="10" height="5" rx="2.500"/></g></svg>
<div class="t" style="left:743.300px;top:993px;font-family:'Liberation Serif',serif;font-size:13px;font-weight:bold;color:#a8a8a8">44</div>
<svg style="left:775.7px;top:1001px" width="8" height="5" viewBox="0 0 8 5"><path d="M.7 4.300 L4 1 L7.300 4.300" fill="none" stroke="#fff" stroke-width="1.300"/></svg>
<div class="bl" style="left:727.200px;font-size:12.14px">Участники</div>
<!-- chat -->
<svg style="left:825px;top:991px" width="24" height="24" viewBox="0 0 24 24"><g fill="none" stroke="#fff" stroke-width="1.400" stroke-linejoin="round"><path d="M5.500 6 H14 Q18 6 18 10 V14 Q18 18 14 18 H9.500 L5.500 21.800 V18 Q1.200 17.500 1.200 14 V10 Q1.200 6 5.500 6 Z"/><path d="M7.500 5.500 V4.500 Q7.500 1.200 11 1.200 H18.500 Q22.500 1.200 22.500 5 V9.500 Q22.500 13 19 13.300"/></g><g fill="#fff"><circle cx="6" cy="12" r="1.100"/><circle cx="9.600" cy="12" r="1.100"/><circle cx="13.200" cy="12" r="1.100"/></g></svg>
<svg style="left:865.7px;top:1001px" width="8" height="5" viewBox="0 0 8 5"><path d="M.7 4.300 L4 1 L7.300 4.300" fill="none" stroke="#fff" stroke-width="1.300"/></svg>
<div class="bl" style="left:836.600px;font-size:11.15px">Чат</div>
<!-- react -->
<svg style="left:918.500px;top:992.500px" width="25" height="22" viewBox="0 0 25 22"><path d="M12 19.500 L3 10.500 Q-.5 6 3 2.800 Q6.500 .2 10 3.200 L12.200 5.500 L14.500 3.200 Q18 .2 21.500 2.800 Q25 6 21.500 10.500 Z" fill="none" stroke="#fff" stroke-width="1.400" stroke-linejoin="round" transform="rotate(-12 12 10)"/></svg>
<svg style="left:964.6px;top:1001px" width="8" height="5" viewBox="0 0 8 5"><path d="M.7 4.300 L4 1 L7.300 4.300" fill="none" stroke="#fff" stroke-width="1.300"/></svg>
<div class="bl" style="left:931.200px;font-size:11.97px">Отреагировать</div>
<!-- share -->
<div class="a" style="left:1017.700px;top:992.800px;width:24.400px;height:19.800px;border-radius:3.500px;background:#22e58b"></div>
<svg style="left:1023.400px;top:996.200px" width="13" height="13" viewBox="0 0 13 13"><path d="M6.500 12 V2.500 M2 6.500 L6.500 2 L11 6.500" fill="none" stroke="#000" stroke-width="2.300"/></svg>
<div class="bl" style="left:1030.400px;font-size:11.95px">Поделиться</div>
<!-- info -->
<svg style="left:1156px;top:990.500px" width="25" height="25" viewBox="0 0 25 25"><circle cx="12.400" cy="12.300" r="11.300" fill="none" stroke="#fff" stroke-width="1.400"/><circle cx="12.300" cy="6.800" r="1.400" fill="#fff"/><path d="M10 10.300 H13 V17.800 M9.800 18 H15.500" fill="none" stroke="#fff" stroke-width="1.500"/></svg>
<div class="bl" style="left:1168.600px;font-size:12.05px">Информация о конференции</div>
<!-- more -->
<svg style="left:1297.600px;top:990.500px" width="25" height="25" viewBox="0 0 25 25"><circle cx="12.400" cy="12.300" r="11.300" fill="none" stroke="#fff" stroke-width="1.400"/><circle cx="7" cy="12.300" r="1.400" fill="#fff"/><circle cx="12.400" cy="12.300" r="1.400" fill="#fff"/><circle cx="17.800" cy="12.300" r="1.400" fill="#fff"/></svg>
<div class="bl" style="left:1310.600px;font-size:12.37px">Дополнительно</div>
<!-- leave -->
<svg style="left:1859px;top:990px" width="27" height="26" viewBox="0 0 27 26"><path d="M10.300 1.400 H24.600 V20 L17.700 23.700 V6 L24.400 1.600" fill="none" stroke="#e8235e" stroke-width="1.500" stroke-linejoin="round"/><g fill="none" stroke="#fff" stroke-width="1.500" stroke-linecap="round" stroke-linejoin="round"><circle cx="9.900" cy="6.400" r="2.700"/><path d="M7 10.200 Q4 11 2.600 13.200 Q2.300 14.600 3.800 14.600 L6.600 13.200 L5.800 16.800 L3 21.800 Q2.800 23.500 4.400 23.600 L6.300 23.400 L9.400 18.400 L10.400 23.200 Q11.800 24.100 13.200 23 L12.800 15.400 L15.400 14 Q16.200 12.600 14.800 11.600 L12.200 10"/></g></svg>
<div class="bl" style="left:1871.500px;font-size:11.82px">Выйти</div>
<!-- mouse cursor -->
<svg style="left:1118px;top:398px" width="26" height="36" viewBox="0 0 26 36"><path d="M2.1 2.4 L2.1 30.8 L8.3 25.6 L12.2 33.0 L18.4 29.2 L14.4 22.9 L23.0 22.9 Z" fill="#fff" stroke="#8f8f96" stroke-width=".9" stroke-linejoin="miter"/><path d="M3.8 6.7 L3.8 27.6 L9.1 22.9 L12.6 31.6 L15.8 30.2 L12.3 21.8 L19.1 21.7 Z" fill="#3434ee"/></svg>
</body></html>
